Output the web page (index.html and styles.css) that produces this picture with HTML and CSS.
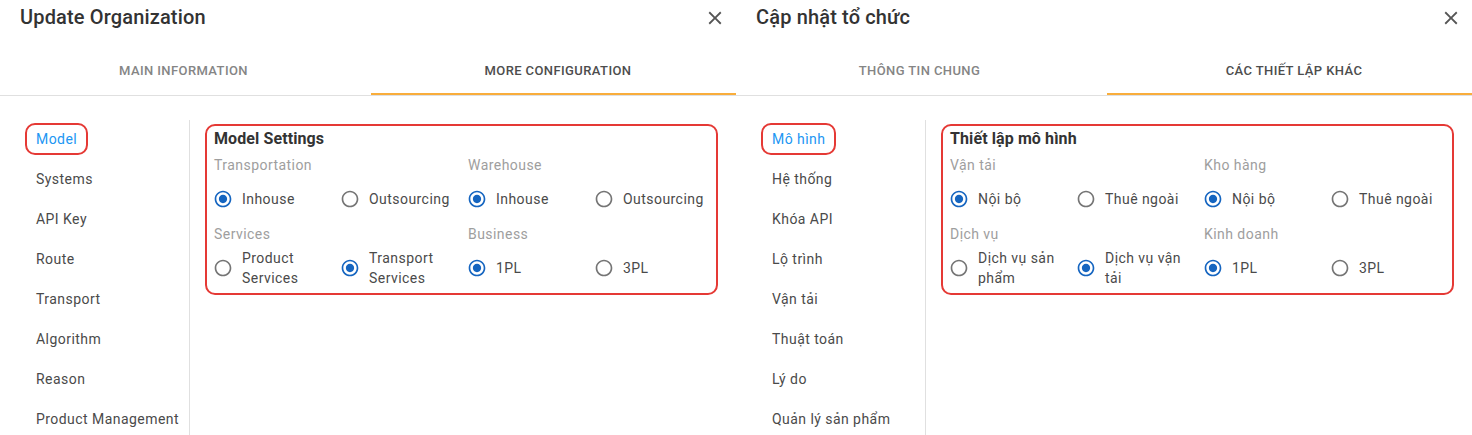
FILE: index.html
```html
<!DOCTYPE html>
<html lang="en">
<head>
<meta charset="utf-8">
<title>Update Organization</title>
<link rel="stylesheet" href="styles.css">
</head>
<body>
<div class="panel">
  <div class="header">
    <h2 class="title">Update Organization</h2>
    <svg class="close" viewBox="0 0 24 24" width="22" height="22"><path d="M19 6.41L17.59 5 12 10.59 6.41 5 5 6.41 10.59 12 5 17.59 6.41 19 12 13.41 17.59 19 19 17.59 13.41 12z"/></svg>
  </div>
  <div class="tabs">
    <div class="tab">Main Information</div>
    <div class="tab active">More Configuration</div>
  </div>
  <div class="body">
    <ul class="side">
      <li><span class="lbl on">Model</span></li>
      <li><span class="lbl">Systems</span></li>
      <li><span class="lbl">API Key</span></li>
      <li><span class="lbl">Route</span></li>
      <li><span class="lbl">Transport</span></li>
      <li><span class="lbl">Algorithm</span></li>
      <li><span class="lbl">Reason</span></li>
      <li><span class="lbl">Product Management</span></li>
    </ul>
    <div class="content">
      <div class="box">
        <div class="box-title">Model Settings</div>
        <div class="groups">
          <div class="group">
            <div class="glabel">Transportation</div>
            <div class="opts">
              <label class="opt"><svg class="radio checked" viewBox="0 0 24 24"><path d="M12 7c-2.76 0-5 2.24-5 5s2.24 5 5 5 5-2.24 5-5-2.24-5-5-5zm0-5C6.48 2 2 6.48 2 12s4.48 10 10 10 10-4.48 10-10S17.52 2 12 2zm0 18c-4.42 0-8-3.58-8-8s3.58-8 8-8 8 3.58 8 8-3.58 8-8 8z"/></svg><span class="otext">Inhouse</span></label>
              <label class="opt"><svg class="radio" viewBox="0 0 24 24"><path d="M12 2C6.48 2 2 6.48 2 12s4.48 10 10 10 10-4.48 10-10S17.52 2 12 2zm0 18c-4.42 0-8-3.58-8-8s3.58-8 8-8 8 3.58 8 8-3.58 8-8 8z"/></svg><span class="otext">Outsourcing</span></label>
            </div>
          </div>
          <div class="group">
            <div class="glabel">Warehouse</div>
            <div class="opts">
              <label class="opt"><svg class="radio checked" viewBox="0 0 24 24"><path d="M12 7c-2.76 0-5 2.24-5 5s2.24 5 5 5 5-2.24 5-5-2.24-5-5-5zm0-5C6.48 2 2 6.48 2 12s4.48 10 10 10 10-4.48 10-10S17.52 2 12 2zm0 18c-4.42 0-8-3.58-8-8s3.58-8 8-8 8 3.58 8 8-3.58 8-8 8z"/></svg><span class="otext">Inhouse</span></label>
              <label class="opt"><svg class="radio" viewBox="0 0 24 24"><path d="M12 2C6.48 2 2 6.48 2 12s4.48 10 10 10 10-4.48 10-10S17.52 2 12 2zm0 18c-4.42 0-8-3.58-8-8s3.58-8 8-8 8 3.58 8 8-3.58 8-8 8z"/></svg><span class="otext">Outsourcing</span></label>
            </div>
          </div>
          <div class="group">
            <div class="glabel">Services</div>
            <div class="opts">
              <label class="opt"><svg class="radio" viewBox="0 0 24 24"><path d="M12 2C6.48 2 2 6.48 2 12s4.48 10 10 10 10-4.48 10-10S17.52 2 12 2zm0 18c-4.42 0-8-3.58-8-8s3.58-8 8-8 8 3.58 8 8-3.58 8-8 8z"/></svg><span class="otext">Product Services</span></label>
              <label class="opt"><svg class="radio checked" viewBox="0 0 24 24"><path d="M12 7c-2.76 0-5 2.24-5 5s2.24 5 5 5 5-2.24 5-5-2.24-5-5-5zm0-5C6.48 2 2 6.48 2 12s4.48 10 10 10 10-4.48 10-10S17.52 2 12 2zm0 18c-4.42 0-8-3.58-8-8s3.58-8 8-8 8 3.58 8 8-3.58 8-8 8z"/></svg><span class="otext">Transport Services</span></label>
            </div>
          </div>
          <div class="group">
            <div class="glabel">Business</div>
            <div class="opts">
              <label class="opt"><svg class="radio checked" viewBox="0 0 24 24"><path d="M12 7c-2.76 0-5 2.24-5 5s2.24 5 5 5 5-2.24 5-5-2.24-5-5-5zm0-5C6.48 2 2 6.48 2 12s4.48 10 10 10 10-4.48 10-10S17.52 2 12 2zm0 18c-4.42 0-8-3.58-8-8s3.58-8 8-8 8 3.58 8 8-3.58 8-8 8z"/></svg><span class="otext">1PL</span></label>
              <label class="opt"><svg class="radio" viewBox="0 0 24 24"><path d="M12 2C6.48 2 2 6.48 2 12s4.48 10 10 10 10-4.48 10-10S17.52 2 12 2zm0 18c-4.42 0-8-3.58-8-8s3.58-8 8-8 8 3.58 8 8-3.58 8-8 8z"/></svg><span class="otext">3PL</span></label>
            </div>
          </div>
        </div>
      </div>
    </div>
  </div>
</div>

<div class="panel">
  <div class="header">
    <h2 class="title">Cập nhật tổ chức</h2>
    <svg class="close" viewBox="0 0 24 24" width="22" height="22"><path d="M19 6.41L17.59 5 12 10.59 6.41 5 5 6.41 10.59 12 5 17.59 6.41 19 12 13.41 17.59 19 19 17.59 13.41 12z"/></svg>
  </div>
  <div class="tabs">
    <div class="tab">Thông tin chung</div>
    <div class="tab active">Các thiết lập khác</div>
  </div>
  <div class="body">
    <ul class="side">
      <li><span class="lbl on">Mô hình</span></li>
      <li><span class="lbl">Hệ thống</span></li>
      <li><span class="lbl">Khóa API</span></li>
      <li><span class="lbl">Lộ trình</span></li>
      <li><span class="lbl">Vận tải</span></li>
      <li><span class="lbl">Thuật toán</span></li>
      <li><span class="lbl">Lý do</span></li>
      <li><span class="lbl">Quản lý sản phẩm</span></li>
    </ul>
    <div class="content">
      <div class="box">
        <div class="box-title">Thiết lập mô hình</div>
        <div class="groups">
          <div class="group">
            <div class="glabel">Vận tải</div>
            <div class="opts">
              <label class="opt"><svg class="radio checked" viewBox="0 0 24 24"><path d="M12 7c-2.76 0-5 2.24-5 5s2.24 5 5 5 5-2.24 5-5-2.24-5-5-5zm0-5C6.48 2 2 6.48 2 12s4.48 10 10 10 10-4.48 10-10S17.52 2 12 2zm0 18c-4.42 0-8-3.58-8-8s3.58-8 8-8 8 3.58 8 8-3.58 8-8 8z"/></svg><span class="otext">Nội bộ</span></label>
              <label class="opt"><svg class="radio" viewBox="0 0 24 24"><path d="M12 2C6.48 2 2 6.48 2 12s4.48 10 10 10 10-4.48 10-10S17.52 2 12 2zm0 18c-4.42 0-8-3.58-8-8s3.58-8 8-8 8 3.58 8 8-3.58 8-8 8z"/></svg><span class="otext">Thuê ngoài</span></label>
            </div>
          </div>
          <div class="group">
            <div class="glabel">Kho hàng</div>
            <div class="opts">
              <label class="opt"><svg class="radio checked" viewBox="0 0 24 24"><path d="M12 7c-2.76 0-5 2.24-5 5s2.24 5 5 5 5-2.24 5-5-2.24-5-5-5zm0-5C6.48 2 2 6.48 2 12s4.48 10 10 10 10-4.48 10-10S17.52 2 12 2zm0 18c-4.42 0-8-3.58-8-8s3.58-8 8-8 8 3.58 8 8-3.58 8-8 8z"/></svg><span class="otext">Nội bộ</span></label>
              <label class="opt"><svg class="radio" viewBox="0 0 24 24"><path d="M12 2C6.48 2 2 6.48 2 12s4.48 10 10 10 10-4.48 10-10S17.52 2 12 2zm0 18c-4.42 0-8-3.58-8-8s3.58-8 8-8 8 3.58 8 8-3.58 8-8 8z"/></svg><span class="otext">Thuê ngoài</span></label>
            </div>
          </div>
          <div class="group">
            <div class="glabel">Dịch vụ</div>
            <div class="opts">
              <label class="opt"><svg class="radio" viewBox="0 0 24 24"><path d="M12 2C6.48 2 2 6.48 2 12s4.48 10 10 10 10-4.48 10-10S17.52 2 12 2zm0 18c-4.42 0-8-3.58-8-8s3.58-8 8-8 8 3.58 8 8-3.58 8-8 8z"/></svg><span class="otext">Dịch vụ sản phẩm</span></label>
              <label class="opt"><svg class="radio checked" viewBox="0 0 24 24"><path d="M12 7c-2.76 0-5 2.24-5 5s2.24 5 5 5 5-2.24 5-5-2.24-5-5-5zm0-5C6.48 2 2 6.48 2 12s4.48 10 10 10 10-4.48 10-10S17.52 2 12 2zm0 18c-4.42 0-8-3.58-8-8s3.58-8 8-8 8 3.58 8 8-3.58 8-8 8z"/></svg><span class="otext">Dịch vụ vận tải</span></label>
            </div>
          </div>
          <div class="group">
            <div class="glabel">Kinh doanh</div>
            <div class="opts">
              <label class="opt"><svg class="radio checked" viewBox="0 0 24 24"><path d="M12 7c-2.76 0-5 2.24-5 5s2.24 5 5 5 5-2.24 5-5-2.24-5-5-5zm0-5C6.48 2 2 6.48 2 12s4.48 10 10 10 10-4.48 10-10S17.52 2 12 2zm0 18c-4.42 0-8-3.58-8-8s3.58-8 8-8 8 3.58 8 8-3.58 8-8 8z"/></svg><span class="otext">1PL</span></label>
              <label class="opt"><svg class="radio" viewBox="0 0 24 24"><path d="M12 2C6.48 2 2 6.48 2 12s4.48 10 10 10 10-4.48 10-10S17.52 2 12 2zm0 18c-4.42 0-8-3.58-8-8s3.58-8 8-8 8 3.58 8 8-3.58 8-8 8z"/></svg><span class="otext">3PL</span></label>
            </div>
          </div>
        </div>
      </div>
    </div>
  </div>
</div>
</body>
</html>
```

FILE: styles.css
```css
* { box-sizing: border-box; }
html, body { margin: 0; padding: 0; }
body {
  display: flex;
  width: 1472px;
  height: 435px;
  overflow: hidden;
  background: #fff;
  font-family: Roboto, "Noto Sans", "Liberation Sans", sans-serif;
  color: #444;
}
.panel {
  width: 736px;
  height: 435px;
  flex: 0 0 736px;
  overflow: hidden;
  display: flex;
  flex-direction: column;
}
.header {
  height: 48px;
  flex: 0 0 48px;
  display: flex;
  justify-content: space-between;
  align-items: flex-start;
  padding: 0 10px 0 20px;
}
.title {
  margin: 0;
  font-size: 20px;
  font-weight: 500;
  line-height: 34px;
  letter-spacing: 0.15px;
  color: #333;
}
.close {
  margin-top: 7px;
  fill: #555;
}
.tabs {
  display: flex;
  flex: 0 0 48px;
  height: 48px;
  border-bottom: 1px solid #e0e0e0;
  gap: 4px;
  width: 745px;
}
.tab {
  width: 367px;
  flex: 0 0 auto;
  text-align: center;
  font-size: 13px;
  font-weight: 500;
  letter-spacing: 0.4px;
  text-transform: uppercase;
  line-height: 46px;
  color: #858585;
  border-bottom: 2px solid transparent;
}
.tab.active {
  width: 374px;
  color: #4d4d4d;
  border-bottom-color: #f9ad3b;
}
.body {
  flex: 1;
  display: flex;
  padding-top: 24px;
  min-height: 0;
}
.side {
  list-style: none;
  margin: 0;
  padding: 1px 0 0 25px;
  width: 190px;
  flex: 0 0 190px;
  border-right: 1px solid #e0e0e0;
}
.side li {
  height: 36px;
  margin-bottom: 4px;
  display: flex;
  align-items: center;
}
.lbl {
  display: inline-block;
  padding: 4px 9px;
  border: 2px solid transparent;
  border-radius: 10px;
  font-size: 14px;
  line-height: 20px;
  letter-spacing: 0.45px;
  color: #4a4a4a;
  white-space: nowrap;
}
.lbl.on {
  color: #2196f3;
  border-color: #e53935;
}
.content {
  flex: 1;
  min-width: 0;
  padding: 4px 18px 0 15px;
}
.box {
  border: 2px solid #e53935;
  border-radius: 10px;
  padding: 1px 0 4px 7px;
}
.box-title {
  font-size: 16px;
  font-weight: 700;
  line-height: 24px;
  letter-spacing: 0.1px;
  color: #333;
}
.groups {
  display: grid;
  grid-template-columns: 254px 1fr;
}
.glabel {
  margin-top: 4px;
  font-size: 14px;
  line-height: 20px;
  color: #9e9e9e;
  letter-spacing: 0.45px;
}
.opts {
  margin-top: 3px;
  display: grid;
  grid-template-columns: 127px 1fr;
  height: 42px;
}
.opt {
  display: flex;
  align-items: center;
  gap: 9px;
  margin-left: -1px;
}
.radio {
  width: 20px;
  height: 20px;
  flex: 0 0 20px;
  fill: #757575;
}
.radio.checked { fill: #1565c0; }
.otext {
  font-size: 14px;
  line-height: 20px;
  letter-spacing: 0.45px;
  color: #4a4a4a;
  max-width: 90px;
}
```
